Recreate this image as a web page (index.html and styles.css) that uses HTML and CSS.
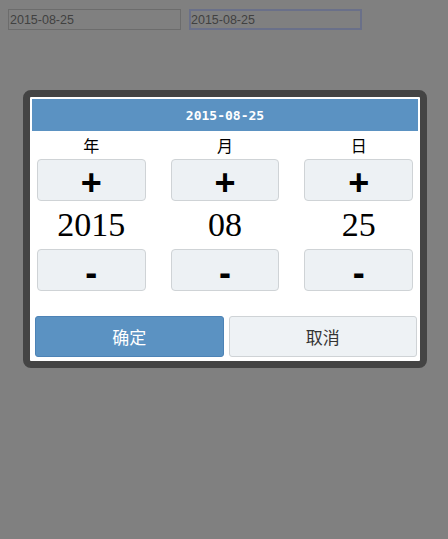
FILE: index.html
```html
<!DOCTYPE html>
<html lang="zh-CN">
<head>
<meta charset="utf-8">
<title>日期选择</title>
<link rel="stylesheet" href="styles.css">
</head>
<body>
<div class="fields">
  <input class="field" type="text" value="2015-08-25">
  <input class="field field-focus" type="text" value="2015-08-25">
</div>

<div class="dialog">
  <div class="dialog-title">2015-08-25</div>
  <div class="picker">
    <div class="col">
      <div class="label">年</div>
      <div class="step">+</div>
      <div class="value">2015</div>
      <div class="step">-</div>
    </div>
    <div class="col">
      <div class="label">月</div>
      <div class="step">+</div>
      <div class="value">08</div>
      <div class="step">-</div>
    </div>
    <div class="col">
      <div class="label">日</div>
      <div class="step">+</div>
      <div class="value">25</div>
      <div class="step">-</div>
    </div>
  </div>
  <div class="actions">
    <div class="btn btn-ok">确定</div>
    <div class="btn btn-cancel">取消</div>
  </div>
</div>
</body>
</html>
```

FILE: styles.css
```css
html, body {
  margin: 0;
  padding: 0;
}
body {
  background: #808080;
  width: 448px;
  height: 539px;
  overflow: hidden;
  font-family: "Liberation Sans", Arial, sans-serif;
  padding: 9px 8px 0;
  box-sizing: border-box;
}
.fields {
  display: flex;
  gap: 8px;
}
.field {
  width: 173px;
  height: 21px;
  box-sizing: border-box;
  margin: 0;
  padding: 0 1px;
  border: 1px solid #6c6c6c;
  background: #808080;
  color: #414141;
  font-family: "Liberation Sans", Arial, sans-serif;
  font-size: 12.5px;
  outline: none;
}
.field-focus {
  border: 2px solid #6a7089;
  padding: 0;
}
.dialog {
  position: absolute;
  left: 23px;
  top: 90px;
  width: 404px;
  box-sizing: border-box;
  border: 7px solid #444444;
  border-radius: 8px;
  background: #ffffff;
  padding: 2px 0 4px;
}
.dialog-title {
  margin: 0 2px;
  height: 32px;
  background: #5b92c2;
  color: #ffffff;
  font-family: "DejaVu Sans Mono", monospace;
  font-weight: bold;
  font-size: 13px;
  display: flex;
  align-items: center;
  justify-content: center;
}
.picker {
  display: grid;
  grid-template-columns: 1fr 1fr 1fr;
  column-gap: 25px;
  padding: 0 7px;
}
.col {
  display: flex;
  flex-direction: column;
}
.label {
  height: 28px;
  line-height: 28px;
  text-align: center;
  font-family: "Noto Sans CJK SC", sans-serif;
  font-size: 16px;
  color: #000;
}
.step {
  height: 42px;
  box-sizing: border-box;
  border: 1px solid #cfd3d6;
  border-radius: 4px;
  background: #edf1f4;
  display: flex;
  align-items: center;
  justify-content: center;
  padding-top: 6px;
  font-family: "Liberation Sans", Arial, sans-serif;
  font-weight: bold;
  font-size: 36px;
  color: #000;
}
.value {
  height: 48px;
  line-height: 48px;
  text-align: center;
  font-family: "Liberation Serif", "Times New Roman", serif;
  font-size: 34px;
  color: #000;
}
.actions {
  display: flex;
  gap: 5px;
  padding: 0 3px 0 5px;
  margin-top: 25px;
}
.btn {
  flex: 1;
  height: 41px;
  box-sizing: border-box;
  border-radius: 3px;
  display: flex;
  align-items: center;
  justify-content: center;
  font-family: "Noto Sans CJK SC", sans-serif;
  font-size: 17px;
}
.btn-ok {
  background: #5b92c2;
  border: 1px solid #4d83b6;
  color: #ffffff;
}
.btn-cancel {
  background: #eef2f5;
  border: 1px solid #cfd3d6;
  color: #333333;
}
```
